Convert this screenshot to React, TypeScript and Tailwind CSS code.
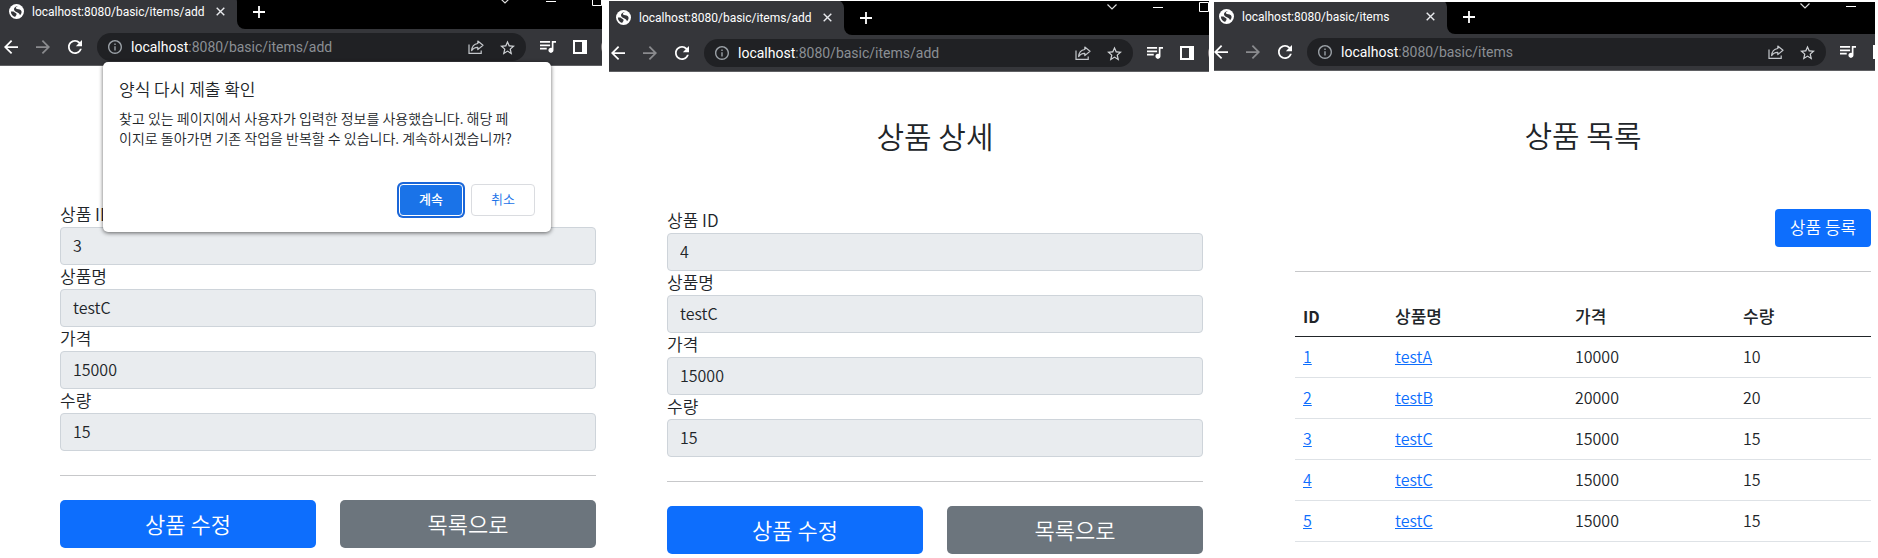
import { ReactNode } from 'react';

interface BrowserProps {
  url: string;
  stripClass: string;
  tabClass: string;
  insetClass: string;
  controlsClass: string;
  toolsClass: string;
  children: ReactNode;
}

interface DetailProps {
  prefix: string;
  title?: string;
  itemId: string;
  className: string;
}

interface Item {
  id: number;
  name: string;
  price: number;
  quantity: number;
}

const items: Item[] = [
  { id: 1, name: 'testA', price: 10000, quantity: 10 },
  { id: 2, name: 'testB', price: 20000, quantity: 20 },
  { id: 3, name: 'testC', price: 15000, quantity: 15 },
  { id: 4, name: 'testC', price: 15000, quantity: 15 },
  { id: 5, name: 'testC', price: 15000, quantity: 15 },
];

function GlobeIcon() {
  return (
    <svg viewBox="0 0 16 16" className="size-[15px] shrink-0">
      <circle cx="8" cy="8" r="8" fill="#fff" />
      <path
        d="M9.500 2.200c-1.900.9-2.700 1.900-1.900 2.700 1 .9 3.600.3 5.100 1.800 1.200 1.300.9 3.800-1 5.300-.3-1.700-1.500-2.300-2.700-3-1.400-.9-3.200-1.200-3.600-2.900-.4-1.700 1-3.300 4.100-3.900z"
        fill="#35363a"
      />
      <path d="M2 8h2.500c1.200 0 1.200 1 2.200 1.400 1.100.5 1.700 1.200 1.200 2.300-.4.9-1.200 1.100-1.300 2.200C3.900 13.300 2 10.900 2 8z" fill="#35363a" />
    </svg>
  );
}

function ShareIcon() {
  return (
    <svg viewBox="0 0 16 14" className="h-[14px] w-4" fill="none" stroke="#c4c7cb" strokeWidth="1.2">
      <path d="M1 4.500V13.300h12.200V10.500" />
      <path d="M9.800 1l5.200 4.300-5.200 4.300V7.300C7.300 7.200 5.200 8 3.600 10.600c.3-4 2.600-6.600 6.200-7.100z" strokeLinejoin="round" />
    </svg>
  );
}

function Browser({ url, stripClass, tabClass, insetClass, controlsClass, toolsClass, children }: BrowserProps) {
  const [host, ...rest] = url.split(':');

  return (
    <div className="w-full">
      <header className="font-[Roboto,sans-serif] font-normal">
        {/* Tab strip */}
        <div className={`flex items-end overflow-hidden bg-[#35363a] ${stripClass}`}>
          <div className={`shrink-0 bg-black ${tabClass}`}>
            <div className={`flex h-[35px] items-center rounded-tr-lg bg-[#35363a] pr-3 ${insetClass}`}>
              <div className="flex flex-1 items-center gap-2 pl-[5px]">
                <GlobeIcon />
                <span className="whitespace-nowrap text-xs text-white">{url}</span>
              </div>
              <button aria-label="Close tab">
                <svg viewBox="0 0 9 9" className="size-[9px]" stroke="#e8eaed" strokeWidth="1.4">
                  <path d="M.7.7l7.600 7.600M8.300.7L.7 8.300" />
                </svg>
              </button>
            </div>
          </div>
          <div className="flex h-[60px] flex-1 items-end justify-between rounded-bl-lg bg-black pl-4">
            <button aria-label="New tab" className="mb-[11px]">
              <svg viewBox="0 0 12 12" className="size-3" stroke="#fff" strokeWidth="1.800">
                <path d="M6 0v12M0 6h12" />
              </svg>
            </button>
            <div className={`mb-[23px] flex items-center gap-9 overflow-hidden ${controlsClass}`}>
              <svg viewBox="0 0 10 10" className="size-[10px] shrink-0" fill="none" stroke="#ddd" strokeWidth="1.200">
                <path d="M.5 2.500L5 7l4.500-4.500" />
              </svg>
              <svg viewBox="0 0 10 10" className="size-[10px] shrink-0" stroke="#fff">
                <path d="M0 5.500h10" />
              </svg>
              <svg viewBox="0 0 10 10" className="size-[10px] shrink-0" fill="none" stroke="#fff">
                <path d="M.5.5h9v9h-9z" />
              </svg>
            </div>
          </div>
        </div>

        {/* Address bar */}
        <div className={`flex items-center border-b border-[#5f6063] bg-[#35363a] py-1 ${insetClass}`}>
          <div className="flex shrink-0 items-center gap-[18px] pr-[15px]">
            <button aria-label="Back">
              <svg viewBox="4 4 16 16" className="size-[14px]" fill="#fff">
                <path d="M20 11H7.830l5.590-5.590L12 4l-8 8 8 8 1.410-1.410L7.830 13H20v-2z" />
              </svg>
            </button>
            <button aria-label="Forward">
              <svg viewBox="4 4 16 16" className="size-[14px]" fill="#8a8b8e">
                <path d="M12 4l-1.410 1.410L16.170 11H4v2h12.170l-5.580 5.590L12 20l8-8z" />
              </svg>
            </button>
            <button aria-label="Reload">
              <svg viewBox="4 4 16 16" className="size-[14px]" fill="#fff">
                <path d="M17.650 6.350C16.200 4.900 14.210 4 12 4c-4.420 0-7.990 3.580-7.990 8s3.570 8 7.990 8c3.730 0 6.840-2.550 7.730-6h-2.080c-.82 2.330-3.040 4-5.650 4-3.310 0-6-2.690-6-6s2.690-6 6-6c1.660 0 3.140.69 4.220 1.780L13 11h7V4l-2.350 2.350z" />
              </svg>
            </button>
          </div>
          <div className="flex h-7 min-w-0 flex-1 items-center rounded-full bg-[#202124] px-[11px]">
            <svg viewBox="2 2 20 20" className="mr-[9px] size-[14px] shrink-0" fill="#9aa0a6">
              <path d="M11 7h2v2h-2zm0 4h2v6h-2zm1-9C6.480 2 2 6.480 2 12s4.480 10 10 10 10-4.480 10-10S17.520 2 12 2zm0 18c-4.410 0-8-3.590-8-8s3.590-8 8-8 8 3.590 8 8-3.590 8-8 8z" />
            </svg>
            <span className="flex-1 whitespace-nowrap text-sm text-[#8b8f94]">
              <span className="text-white">{host}</span>:{rest.join(':')}
            </span>
            <div className="flex items-center gap-4">
              <button aria-label="Share">
                <ShareIcon />
              </button>
              <button aria-label="Bookmark">
                <svg viewBox="2 2 20 19" className="size-[15px]" fill="#d0d3d6">
                  <path d="M22 9.240l-7.190-.62L12 2 9.190 8.630 2 9.240l5.460 4.730L5.820 21 12 17.270 18.180 21l-1.630-7.030L22 9.240zM12 15.400l-3.760 2.270 1-4.280-3.320-2.880 4.380-.38L12 6.100l1.710 4.040 4.380.38-3.320 2.880 1 4.280L12 15.400z" />
                </svg>
              </button>
            </div>
          </div>
          <div className={`flex shrink-0 items-center overflow-hidden pl-[14px] ${toolsClass}`}>
            <button aria-label="Media" className="mr-[17px] shrink-0">
              <svg viewBox="3 6 19 14" className="h-3 w-4" fill="#fff">
                <path d="M15 6H3v2h12V6zm0 4H3v2h12v-2zM3 16h8v-2H3v2zM17 6v8.180c-.31-.11-.65-.18-1-.18-1.660 0-3 1.340-3 3s1.340 3 3 3 3-1.340 3-3V8h3V6h-5z" />
              </svg>
            </button>
            <button
              aria-label="Side panel"
              className="mr-[14px] size-[14px] shrink-0 border-2 border-r-[5px] border-white"
            />
            <span className="size-5 shrink-0 rounded-full bg-[#8d8688]" />
          </div>
        </div>
      </header>
      {children}
    </div>
  );
}

function Field({ id, label, value }: { id: string; label: string; value: string }) {
  return (
    <div>
      <label htmlFor={id} className="block pb-0.5 text-[17px] leading-[22px]">
        {label}
      </label>
      <input
        id={id}
        value={value}
        readOnly
        className="block h-[38px] w-full rounded border border-[#ced4da] bg-[#e9ecef] px-3 pb-0.5 text-base"
      />
    </div>
  );
}

function ItemDetail({ prefix, title, itemId, className }: DetailProps) {
  return (
    <main className={className}>
      <div className="py-12 text-center">
        <div className="mb-2.5 h-[31px]">
          {title && <h2 className="text-[30px] leading-[31px]">{title}</h2>}
        </div>
      </div>
      <Field id={`${prefix}-id`} label="상품 ID" value={itemId} />
      <Field id={`${prefix}-name`} label="상품명" value="testC" />
      <Field id={`${prefix}-price`} label="가격" value="15000" />
      <Field id={`${prefix}-quantity`} label="수량" value="15" />
      <hr className="my-6 border-[#c7c8ca]" />
      <div className="grid grid-cols-2 gap-6">
        <button className="h-12 rounded-[5px] bg-[#0d6efd] pb-0.5 text-[22px] leading-none text-white">상품 수정</button>
        <button className="h-12 rounded-[5px] bg-[#6c757d] pb-0.5 text-[22px] leading-none text-white">목록으로</button>
      </div>
    </main>
  );
}

function ItemList() {
  return (
    <main className="pl-[81px] pr-1">
      <div className="pb-[49px] pt-12 text-center">
        <h2 className="mb-2.5 text-[30px] leading-[31px]">상품 목록</h2>
      </div>
      <div className="flex justify-end">
        <button className="h-[38px] w-24 rounded bg-[#0d6efd] pb-0.5 text-[17px] text-white">상품 등록</button>
      </div>
      <hr className="my-6 border-[#c7c8ca]" />
      <table className="w-full table-fixed text-left leading-6">
        <thead>
          <tr className="border-b border-[#212529]">
            <th className="w-[92px] p-2 font-bold">ID</th>
            <th className="w-[180px] p-2 text-[17px] font-medium">상품명</th>
            <th className="w-[168px] p-2 text-[17px] font-medium">가격</th>
            <th className="p-2 text-[17px] font-medium">수량</th>
          </tr>
        </thead>
        <tbody>
          {items.map((item) => (
            <tr key={item.id} className="border-b border-[#dee2e6]">
              <td className="px-2 pb-[9px] pt-[7px]">
                <a href={`#${item.id}`} className="text-[#0d6efd] underline">{item.id}</a>
              </td>
              <td className="px-2 pb-[9px] pt-[7px]">
                <a href={`#${item.id}`} className="text-[#0d6efd] underline">{item.name}</a>
              </td>
              <td className="px-2 pb-[9px] pt-[7px]">{item.price}</td>
              <td className="px-2 pb-[9px] pt-[7px]">{item.quantity}</td>
            </tr>
          ))}
        </tbody>
      </table>
    </main>
  );
}

function ResubmitDialog() {
  return (
    <div
      role="dialog"
      aria-labelledby="resubmit-title"
      className="absolute left-[103px] top-[62px] w-[448px] rounded-[5px] bg-white p-4 shadow-[0_1px_4px_rgba(0,0,0,0.6)]"
    >
      <h3 id="resubmit-title" className="pb-0.5 text-[17px] leading-[22px]">양식 다시 제출 확인</h3>
      <p className="mt-1.5 whitespace-nowrap text-sm leading-5">
        찾고 있는 페이지에서 사용자가 입력한 정보를 사용했습니다. 해당 페
        <br />
        이지로 돌아가면 기존 작업을 반복할 수 있습니다. 계속하시겠습니까?
      </p>
      <div className="mt-9 flex justify-end gap-2 text-[13px]">
        <button className="h-8 w-16 rounded border border-white bg-[#1a73e8] pb-0.5 font-medium text-white ring-2 ring-[#1a66d8]">계속</button>
        <button className="h-8 w-16 rounded border border-[#dadce0] pb-0.5 text-[#1a73e8]">취소</button>
      </div>
    </div>
  );
}

export default function App() {
  return (
    <div className="grid min-h-screen grid-cols-[609fr_605fr_664fr] bg-white font-['Noto_Sans_CJK_KR',sans-serif] font-[350] text-[#212529]">
      <div className="relative min-w-0 pr-[7px]">
        <Browser
          url="localhost:8080/basic/items/add"
          stripClass="h-[29px]"
          tabClass="w-[237px]"
          insetClass="pl-1"
          controlsClass="w-[102px]"
          toolsClass="w-[76px]"
        >
          <ItemDetail prefix="before" itemId="3" className="pl-[60px] pr-1.5" />
        </Browser>
        <ResubmitDialog />
      </div>
      <div className="min-w-0 pr-[5px] pt-px">
        <Browser
          url="localhost:8080/basic/items/add"
          stripClass="h-[34px]"
          tabClass="w-[235px]"
          insetClass="pl-0.5"
          controlsClass="w-[102px]"
          toolsClass="w-[76px]"
        >
          <ItemDetail prefix="after" title="상품 상세" itemId="4" className="pl-[58px] pr-1.5" />
        </Browser>
      </div>
      <div className="min-w-0 pr-[3px] pt-0.5">
        <Browser
          url="localhost:8080/basic/items"
          stripClass="h-8"
          tabClass="w-[233px]"
          insetClass="pl-0"
          controlsClass="w-[75px]"
          toolsClass="w-[49px]"
        >
          <ItemList />
        </Browser>
      </div>
    </div>
  );
}
